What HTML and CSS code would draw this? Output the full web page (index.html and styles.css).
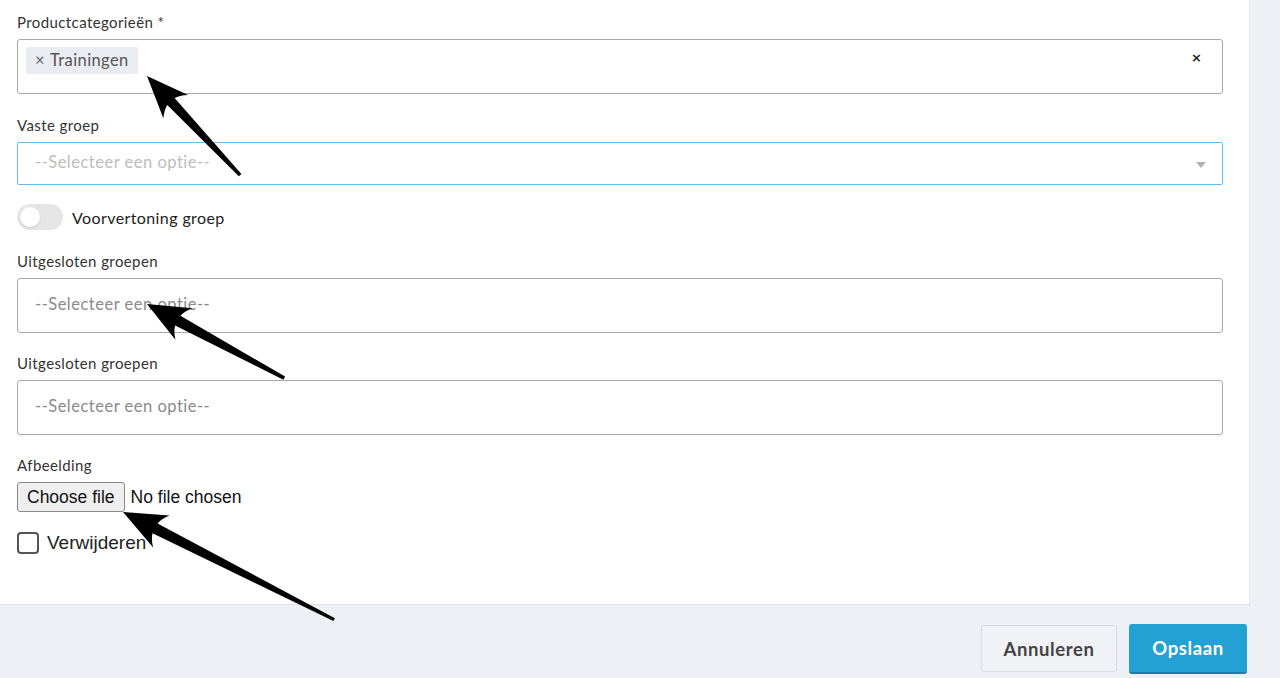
FILE: index.html
```html
<!DOCTYPE html>
<html lang="nl">
<head>
<meta charset="utf-8">
<title>Product</title>
<link rel="stylesheet" href="styles.css">
</head>
<body>
<div class="page">
  <form class="panel">
    <div class="field">
      <div class="label">Productcategorieën *</div>
      <div class="box box-tall multi">
        <span class="tag"><span class="tag-x">×</span>Trainingen</span>
        <span class="clear">×</span>
      </div>
    </div>
    <div class="field field-select">
      <div class="label">Vaste groep</div>
      <div class="box box-select">
        <span class="placeholder light">--Selecteer een optie--</span>
        <span class="caret"></span>
      </div>
    </div>
    <div class="toggle-row">
      <span class="toggle"><span class="knob"></span></span>
      <span class="toggle-text">Voorvertoning groep</span>
    </div>
    <div class="field field-excl">
      <div class="label">Uitgesloten groepen</div>
      <div class="box box-tall">
        <span class="placeholder">--Selecteer een optie--</span>
      </div>
    </div>
    <div class="field field-excl">
      <div class="label">Uitgesloten groepen</div>
      <div class="box box-tall">
        <span class="placeholder">--Selecteer een optie--</span>
      </div>
    </div>
    <div class="field field-file">
      <div class="label">Afbeelding</div>
      <div class="file-row">
        <span class="file-btn">Choose file</span>
        <span class="file-text">No file chosen</span>
      </div>
    </div>
    <label class="check-row">
      <span class="checkbox"></span>
      <span class="check-text">Verwijderen</span>
    </label>
  </form>
  <div class="footer">
    <button class="btn btn-cancel" type="button">Annuleren</button>
    <button class="btn btn-save" type="button">Opslaan</button>
  </div>
</div>
<svg class="arrows" width="1280" height="678" viewBox="0 0 1280 678" aria-hidden="true">
  <g transform="translate(147 76) rotate(46.8)">
    <path d="M0 0 L42 17 Q36 10 35 5 L136 1.8 L136 -1.8 L35 -5 Q36 -10 42 -17 Z"/>
  </g>
  <g transform="translate(147 304) rotate(28.4)">
    <path d="M0 0 L42 18 Q36 11 35 5.5 L156 1.8 L156 -1.8 L35 -5.5 Q36 -11 42 -18 Z"/>
  </g>
  <g transform="translate(123 512) rotate(27)">
    <path d="M0 0 L43 18 Q37 11 36 5.5 L237 1.6 L237 -1.6 L36 -5.5 Q37 -11 43 -18 Z"/>
  </g>
</svg>
</body>
</html>
```
FILE: styles.css
```css
* { box-sizing: border-box; }
html, body { margin: 0; padding: 0; }
body {
  width: 1280px;
  height: 678px;
  overflow: hidden;
  background: #edf0f4;
  font-family: Lato, "Noto Sans", sans-serif;
  color: #333;
  position: relative;
}
.page { width: 1280px; }
.panel {
  width: 1250px;
  background: #fff;
  border-right: 1px solid #e2e6ea;
  border-bottom: 1px solid #dde1e6;
  padding: 13px 28px 50px 17px;
}
.field { margin-bottom: 22px; }
.field-select { margin-bottom: 19px; }
.field-excl { margin-bottom: 21px; }
.label {
  font-size: 15px;
  letter-spacing: 0.4px;
  line-height: 18px;
  color: #333;
  margin-bottom: 8px;
}
.box {
  position: relative;
  width: 1206px;
  border: 1px solid #a9a9a9;
  border-radius: 3px;
  display: flex;
  align-items: center;
  padding: 0 17px 3px;
}
.box-tall { height: 55px; }
.multi { align-items: flex-start; padding: 7px 8px; }
.box-select { height: 43px; border-color: #63bdf3; border-radius: 2px; }
.placeholder { font-size: 16.5px; letter-spacing: 0.5px; color: #8a8a8a; }
.placeholder.light { color: #bdbdbd; }
.tag {
  display: inline-flex;
  align-items: center;
  height: 27px;
  padding: 0 9px 2px;
  background: #e9ecf0;
  border-radius: 2px;
  font-size: 16.5px;
  letter-spacing: 0.4px;
  color: #555;
}
.tag-x { margin-right: 5px; color: #666; }
.clear {
  position: absolute;
  right: 20px;
  top: 10px;
  font-weight: 700;
  color: #222;
  font-family: "DejaVu Sans", sans-serif;
  font-size: 13px;
}
.caret {
  position: absolute;
  right: 16px;
  top: 19px;
  width: 0;
  height: 0;
  border-left: 5px solid transparent;
  border-right: 5px solid transparent;
  border-top: 6px solid #b3b3b3;
}
.toggle-row {
  display: flex;
  align-items: center;
  height: 26px;
  margin-bottom: 22px;
}
.toggle {
  width: 46px;
  height: 26px;
  border-radius: 13px;
  background: #e6e6e6;
  padding: 3px;
  margin-right: 9px;
}
.knob {
  display: block;
  width: 20px;
  height: 20px;
  border-radius: 50%;
  background: #fff;
  box-shadow: 0 1px 2px rgba(0,0,0,0.12);
}
.toggle-text { font-size: 16px; letter-spacing: 0.4px; color: #222; }
.field-file { margin-bottom: 20px; }
.file-row {
  display: flex;
  align-items: center;
  height: 30px;
  font-family: "Liberation Sans", Arial, sans-serif;
  font-size: 17.5px;
  color: #111;
}
.file-btn {
  height: 30px;
  padding: 0 9px;
  display: flex;
  align-items: center;
  background: #efefef;
  border: 1px solid #8a8a8a;
  border-radius: 3px;
  margin-right: 6px;
}
.check-row { display: flex; align-items: center; height: 22px; }
.checkbox {
  width: 22px;
  height: 22px;
  border: 2px solid #555;
  border-radius: 4px;
  margin-right: 8px;
}
.check-text {
  font-family: "Liberation Sans", Arial, sans-serif;
  font-size: 19px;
  line-height: 22px;
  color: #222;
}
.footer {
  display: flex;
  justify-content: flex-end;
  gap: 12px;
  padding: 19px 33px 0 0;
}
.btn {
  border-radius: 3px;
  font-family: Lato, "Noto Sans", sans-serif;
  font-size: 18.5px;
  letter-spacing: 0.6px;
  font-weight: 700;
  cursor: pointer;
}
.btn-cancel {
  width: 136px;
  height: 47px;
  margin-top: 1px;
  background: #f0f2f5;
  border: 1px solid #d9dde2;
  color: #444;
}
.btn-save {
  width: 118px;
  height: 50px;
  background: #23a1d3;
  border: none;
  border-bottom: 2px solid #1a7ea6;
  color: #fff;
}
.arrows {
  position: absolute;
  left: 0;
  top: 0;
  pointer-events: none;
}
.arrows path { fill: #000; }
```
